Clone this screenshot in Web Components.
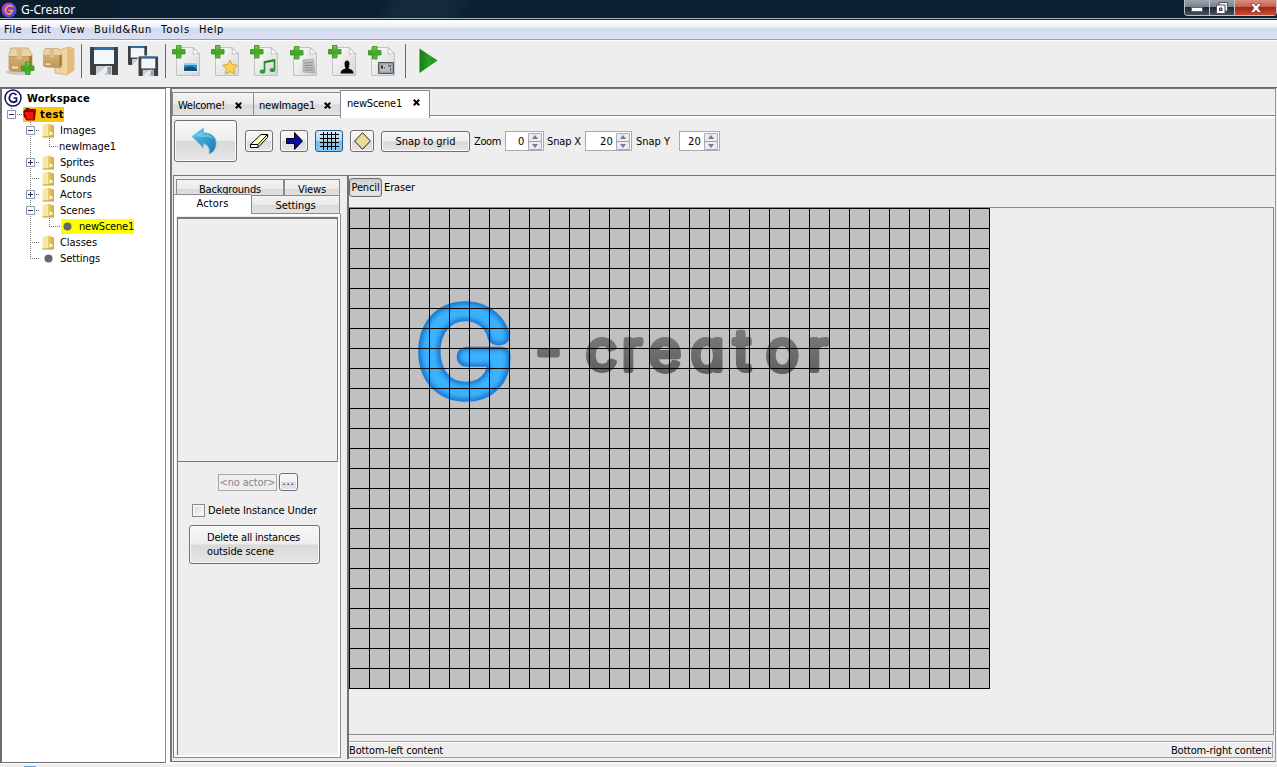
<!DOCTYPE html>
<html lang="en">
<head>
<meta charset="utf-8">
<title>G-Creator</title>
<style>
html,body{margin:0;height:100%;overflow:hidden}
body{background:#eee;color:#000;font:11px/14px "DejaVu Sans Condensed","DejaVu Sans","Noto Sans",sans-serif;font-stretch:condensed}
</style>
</head>
<body>
<app-window></app-window>
<script>
const define=(name,html,setup)=>{
  const t=document.createElement('template');t.innerHTML=html;
  customElements.define(name,class extends HTMLElement{
    constructor(){super();this.attachShadow({mode:'open'}).append(t.content.cloneNode(true));}
    connectedCallback(){if(setup)setup(this,this.shadowRoot);}
  });
};

/* label whose tracking is adjusted to occupy a set width */
define('fit-label',`<style>:host{display:inline-block;flex:none;white-space:pre;line-height:14px}span{display:inline-block}</style><span><slot></slot></span>`,(h,r)=>{
  const w=+h.getAttribute('w'),s=r.querySelector('span');
  if(!w)return;
  s.style.letterSpacing='0px';
  s.style.letterSpacing=((w-s.getBoundingClientRect().width)/h.textContent.length)+'px';
  h.style.width=w+'px';
});

const doc=`<path d="M5.500 2.500h17l6 6v22h-23z" fill="url(#p)" stroke="#c3c3c3"/><path d="M21.500 2.500q2 3 .5 7q3-2 6.500-1z" fill="#fff" stroke="#bbb" stroke-width=".8"/>`;
const plus=(x,y)=>`<path transform="translate(${x} ${y})" d="M4.500.5h4.500v4h4v4.500h-4v4h-4.500v-4h-4v-4.500h4z" fill="url(#g)" stroke="#3d9426" stroke-width=".9"/>`;
const defs=`<defs><linearGradient id="p" x2="1" y2="1"><stop stop-color="#fff"/><stop offset="1" stop-color="#d4d4d4"/></linearGradient><linearGradient id="g" x2="0" y2="1"><stop stop-color="#7ccb4e"/><stop offset=".5" stop-color="#3fa51f"/><stop offset="1" stop-color="#62b93d"/></linearGradient><linearGradient id="b" x2="0" y2="1"><stop stop-color="#dcb87d"/><stop offset="1" stop-color="#c1965a"/></linearGradient><linearGradient id="u" x2="1" y2="1"><stop stop-color="#58c4ee"/><stop offset="1" stop-color="#1878b2"/></linearGradient><linearGradient id="f" x2="1"><stop stop-color="#f4e39a"/><stop offset=".5" stop-color="#e8cf70"/><stop offset="1" stop-color="#cda93e"/></linearGradient><linearGradient id="k" x2="1"><stop stop-color="#157c18"/><stop offset=".5" stop-color="#2c9e28"/><stop offset="1" stop-color="#1e8a1e"/></linearGradient><linearGradient id="o" x2="1" y2="1"><stop stop-color="#e43bb0"/><stop offset=".45" stop-color="#7b3bd8"/><stop offset="1" stop-color="#2c57e8"/></linearGradient></defs>`;
const box=`<path d="M3 8.500L5 2h17l4 6.500v15l-2 2.500-19-1-2-2z" fill="url(#b)" stroke="#b98f55" stroke-width=".7"/><path d="M3 9l2.500-6.500H22l4 6v2H3z" fill="#ecd3a6"/><path d="M3 10.500h20" stroke="#c79d62"/><path d="M23 10.500l3-1.500v14l-3 3z" fill="#a97b41"/><path d="M10.500 2.500h5.500v11h-5z" fill="#dfbd88"/><path d="M6 21.500h6" stroke="#f1dfbe" stroke-width="2"/>`;
const disk=(s)=>`<g transform="${s}"><path d="M0 0h28v28H1L0 27z" fill="#3b4046"/><path d="M4 0h20v3H4z" fill="#2f6cae"/><path d="M4 3h20v14H4z" fill="#f3f7fb"/><path d="M6 19h16v9H6z" fill="#c9ccd0"/><path d="M6 28l10-9h4l-6 9z" fill="#eceef0"/><path d="M17 20h4v7h-3z" fill="#999da4"/></g>`;
const icons={
  app:[16,16,`<circle cx="8" cy="8" r="7.500" fill="url(#o)"/><path d="M11.500 4.500Q8 2.500 5.500 5.500T6 11.500Q9.500 13.500 11.500 8.500H8" fill="none" stroke="#f3a44e" stroke-width="1.700" stroke-linecap="round"/>`],
  pack:[31,32,`<ellipse cx="12" cy="26" rx="12" ry="3" fill="#c9c9c9"/>${box}${plus(15,15.500)}`],
  packs:[32,32,`<path d="M12 6l14-4 5 2v21l-7 5-12-2z" fill="#f0d5a0" stroke="#cda768" stroke-width=".7"/><path d="M24 3v26l7-4V4z" fill="#e3bd7c"/><g transform="translate(-2 2) scale(.8)">${box}</g>`],
  disk:[28,28,disk('')],
  disks:[30,30,disk('scale(.68)')+'<path d="M9.500 9.500h21v21h-21z" fill="#eee"/>'+disk('translate(10.500 10.500) scale(.7)')],
  image:[30,32,doc+`<path d="M12.500 17.500h14v9h-14z" fill="#348ec4" stroke="#eee"/><path d="M13 23q7-4 13 1v2H13z" fill="#164e80"/><path d="M13 19h13" stroke="#8fd4f3" stroke-width="2"/>`+plus(1,0)],
  star:[30,32,doc+`<path d="M20 15l2.200 4.500 5 .8-3.500 3.500.8 5-4.500-2.300-4.500 2.300.8-5-3.500-3.500 5-.8z" fill="#ffd34e" stroke="#d6a322"/>`+plus(1,0)],
  music:[30,32,doc+`<path d="M15.500 26V17l10-2v9.500" fill="none" stroke="#278a2a" stroke-width="1.600"/><path d="M15 18.500l11-2.200v-2L15 16.500z" fill="#278a2a"/><ellipse cx="13.500" cy="26.500" rx="2.800" ry="2" fill="#2c9a2f"/><ellipse cx="23.500" cy="25" rx="2.800" ry="2" fill="#2c9a2f"/>`+plus(1,0)],
  script:[30,32,doc+`<path d="M15 15l10-1 2 14-12-1z" fill="#c4c4c4" stroke="#a0a0a0" stroke-width=".7"/><path d="M16.500 18l8-.5m-8 3l8-.3m-8 2.500l9 .3m-9 2l9 .5" stroke="#888"/>`+plus(2,1)],
  actor:[30,32,doc+`<path d="M13.500 28.500q0-4 5-5l-.6-2Q16.500 16 20 15.500q3.500.5 2.100 6l-.6 2q5 1 5 5z" fill="#080808"/>`+plus(1,0)],
  scene:[30,32,doc+`<path d="M12.500 17.500h15v11h-15z" fill="#969da5" stroke="#555"/><path d="M14.500 19.500h11v7h-11z" fill="#b9c0c8"/><path d="M15 20.500h2v3h-2zm7 0h3v1h-3zm2 3h1v2h-1zm-6-1h1v1h-1z" fill="#333"/>`+plus(2,1)],
  play:[19,26,`<path d="M.5.500L18.500 12.500L.5 25z" fill="url(#k)"/>`],
  undo:[26,28,`<path d="M1 9.500L12.500 1v4.500C22 6 26 11 25 18.500Q24 25 18 27q2-8-5.500-10.500V21z" fill="url(#u)" stroke="#7ac1df" stroke-width=".7"/><path d="M3 9.500l8.500-6V7q8 0 11 5-4-2.500-11-2z" fill="#95def8" opacity=".5"/>`],
  eraser:[18,14,`<path d="M.5 10.500L11 .5h6.500v3L8 13.500H.5z" fill="#ffffc4" stroke="#000"/><path d="M.5 10.500H8L17.500.5M8 10.500v3" fill="none" stroke="#000"/>`],
  arrow:[17,18,`<path d="M.5 6.500h8v-6l8 8.500-8 8.500v-6h-8z" fill="#0a0aa8" stroke="#000"/>`],
  grid:[19,18,`<path d="M3.500 0v18m4-18v18m4-18v18m4-18v18M0 2.500h19M0 6.500h19M0 10.500h19M0 14.500h19" stroke="#000"/>`],
  diamond:[17,18,`<path d="M8.500.7L16.300 9l-7.800 8.300L.7 9z" fill="#eadb98" stroke="#222"/>`],
  close:[7,7,`<path d="M.8.800l5.400 5.400M6.200.800l-5.400 5.400" stroke="#000" stroke-width="2"/>`],
  folder:[13,15,`<path d="M.5 2L6 .5v12L.5 14z" fill="#f6e7a2"/><path d="M6 .5l6 2V14H.5L6 12.500z" fill="url(#f)"/><path d="M7.500 9h3v3h-3z" fill="#fdf6c8"/><path d="M.5 14h11.500" stroke="#b89a45"/>`],
  dot:[13,15,`<circle cx="6.500" cy="7.500" r="4" fill="#666"/>`],
  red:[13,15,`<path d="M1 4.500L3 1.500h3l1 1h5.500l-1 10h-8L1 9z" fill="#b30000" stroke="#400" stroke-width=".8"/><path d="M.8 4.500h9.500l1 8.500H3.500z" fill="#f51414" stroke="#5a0000" stroke-width=".8"/>`],
  logo:[18,18,`<circle cx="9" cy="9" r="8" fill="#fff" stroke="#11115e" stroke-width="1.500"/><path d="M12.500 6Q9 2.500 6.500 6t0 6q3 2.500 6 0V9H9.500" fill="none" stroke="#11115e" stroke-width="1.700"/>`],
  min:[12,5,`<path d="M.5.500h11v4H.5z" fill="#fff" stroke="#666"/>`],
  max:[12,12,`<path d="M3 .5h8.500v8.500H3z" fill="#eee" stroke="#555"/><path d="M.5 3h8.500v8.500H.5z" fill="#fff" stroke="#555"/><path d="M3.500 6h2.500v2.500H3.500z" fill="#abc" stroke="#334"/>`],
  x:[12,10,`<path d="M.5.500h3.500L6 3l2-2.500h3.500L8 5l3.500 4.500H8L6 7 4 9.500H.5L4 5z" fill="#fff" stroke="#7b3a35" stroke-width=".7"/>`]
};
define('ui-icon',`<style>:host{display:inline-block;flex:none}svg{display:block;overflow:visible}</style><div></div>`,(h,r)=>{
  const [w,ht,b]=icons[h.getAttribute('name')];
  r.querySelector('div').innerHTML=`<svg width="${w}" height="${ht}" viewBox="0 0 ${w} ${ht}">${defs}${b}</svg>`;
});

define('title-bar',`<style>
:host{display:flex;flex:none;height:18px;box-sizing:border-box;background:linear-gradient(115deg,#0b1e2e 0 9%,#0c2033 10% 30%,#132a3d 31% 35%,#0b2033 37%);color:#fff;font:12px/18px "Noto Sans","DejaVu Sans",sans-serif;justify-content:space-between;box-shadow:0 1px #a7b0b8,0 2px #14202c}
.n{display:flex;gap:4px;padding:2px 0 0 1px;align-items:center}.n fit-label{line-height:18px}
.c{display:flex;height:16px;border:1px solid #b9c0c6;border-top:0;border-right:0;border-radius:0 0 4px 4px;overflow:hidden;box-sizing:border-box}
.c span{display:flex;align-items:center;justify-content:center;width:25px;background:linear-gradient(#9ba3aa,#79838c 45%,#1b2936 50%,#46535f);border-right:1px solid #c1c7cc;box-sizing:border-box}
.c .x{width:42px;background:linear-gradient(#d99082,#c3604e 45%,#a32713 50%,#c64e33)}
.c .m{padding-top:4px}
</style><div class="n"><ui-icon name="app"></ui-icon><fit-label w="54">G-Creator</fit-label></div><div class="c"><span class="m"><ui-icon name="min"></ui-icon></span><span><ui-icon name="max"></ui-icon></span><span class="x"><ui-icon name="x"></ui-icon></span></div>`);

define('menu-bar',`<style>:host{display:flex;flex:none;height:21px;margin-top:2px;box-sizing:border-box;padding:3px 0 0 4px;gap:9px;background:linear-gradient(#fff,#eff1f9 35%,#d6dcef 42%,#dbe1f3);border-bottom:1px solid #fff;box-shadow:inset 0 -1px #a0a0a4}</style>
<fit-label w="18">File</fit-label><fit-label w="20">Edit</fit-label><fit-label w="25">View</fit-label><fit-label w="58">Build&amp;Run</fit-label><fit-label w="29">Tools</fit-label><fit-label w="25">Help</fit-label>`);

define('tool-bar',`<style>:host{display:flex;flex:none;height:46px;box-sizing:border-box;padding:3px 0 0 6px;align-items:flex-start;background:#eee}i{width:1px;height:34px;background:#666;flex:none}
.d{margin-top:3px}.docs{display:flex;gap:9px;margin:1px 0 0 5px}</style>
<ui-icon name="pack" style="margin-top:2px"></ui-icon><ui-icon name="packs" style="margin-left:6px;margin-top:1px"></ui-icon><i style="margin-left:6px"></i>
<ui-icon class="d" name="disk" style="margin-left:8px"></ui-icon><ui-icon name="disks" style="margin:2px 0 0 10px"></ui-icon><i style="margin-left:7px"></i>
<div class="docs"><ui-icon name="image"></ui-icon><ui-icon name="star"></ui-icon><ui-icon name="music"></ui-icon><ui-icon name="script"></ui-icon><ui-icon name="actor"></ui-icon><ui-icon name="scene"></ui-icon></div>
<i style="margin-left:9px"></i><ui-icon name="play" style="margin:4px 0 0 13px"></ui-icon>`);

/* one tree row; guide lines and expander are drawn in a fixed-width gutter */
define('tree-row',`<style>:host{display:flex;height:16px;align-items:center;box-sizing:border-box}svg{display:block;flex:none}.v{display:flex;align-items:center;height:15px;margin-bottom:-1px}::slotted(fit-label){margin-top:1px}</style><svg height="16"></svg><div class="v"><slot></slot></div>`,(h,r)=>{
  const s=r.querySelector('svg'),w=+h.getAttribute('gutter'),ex=h.getAttribute('ex'),lv=+h.getAttribute('level'),last=h.hasAttribute('last');
  s.setAttribute('width',w);
  const d='stroke="#777" stroke-dasharray="1 1" fill="none"';let m='';
  if(lv==1)m+=`<path d="M9.500 0V8M9 8.500H${w}" ${d}/>`;
  if(lv>=2)m+=`<path d="M28.500 0V${last?9:16}" ${d}/>`;
  if(lv==2)m+=`<path d="M28 8.500H${w-2}" ${d}/>`;
  if(lv==3)m+=`<path d="M47.500 0V8M47 8.500H${w-1}" ${d}/>`;
  if(ex){const x=lv==1?5:24;m+=`<g transform="translate(${x} 4)"><path d="M.5.500h8v8h-8z" fill="#f8fbff" stroke="#8a98ad"/><path d="M2 4.500h5${ex=='+'?'M4.500 2v5':''}" stroke="#335"/></g>`;}
  s.innerHTML=m;
  const c=h.getAttribute('mark');if(c){r.querySelector('.v').style.background=c;}
});
define('workspace-tree',`<style>:host{display:block;width:166px;flex:none;box-sizing:border-box;border:solid #6e6e72;border-width:1px 1px 1px 2px;border-right-color:#8a8a92;background:#fff;height:675px;padding-top:1px}
.b{font:bold 11px/14px "DejaVu Sans Condensed","DejaVu Sans",sans-serif}div{display:flex;height:16px;align-items:center;padding-left:2px}div fit-label{margin:1px 0 0 5px}tree-row ui-icon+fit-label{margin-left:5px}tree-row ui-icon[name=red]+fit-label{margin-left:4px}</style>
<div><ui-icon name="logo"></ui-icon><fit-label class="b" w="63">Workspace</fit-label></div>
<tree-row level="1" gutter="21" ex="-" mark="#ffc20e"><ui-icon name="red"></ui-icon><fit-label class="b" w="24">test</fit-label></tree-row>
<tree-row level="2" gutter="40" ex="-"><ui-icon name="folder"></ui-icon><fit-label w="36">Images</fit-label></tree-row>
<tree-row level="3" gutter="57"><fit-label w="57">newImage1</fit-label></tree-row>
<tree-row level="2" gutter="40" ex="+"><ui-icon name="folder"></ui-icon><fit-label w="34">Sprites</fit-label></tree-row>
<tree-row level="2" gutter="40"><ui-icon name="folder"></ui-icon><fit-label w="36">Sounds</fit-label></tree-row>
<tree-row level="2" gutter="40" ex="+"><ui-icon name="folder"></ui-icon><fit-label w="32">Actors</fit-label></tree-row>
<tree-row level="2" gutter="40" ex="-"><ui-icon name="folder"></ui-icon><fit-label w="35">Scenes</fit-label></tree-row>
<tree-row level="3" gutter="59" mark="#ff0"><ui-icon name="dot"></ui-icon><fit-label w="55">newScene1</fit-label></tree-row>
<tree-row level="2" gutter="40"><ui-icon name="folder"></ui-icon><fit-label w="37">Classes</fit-label></tree-row>
<tree-row level="2" gutter="40" last><ui-icon name="dot"></ui-icon><fit-label w="40">Settings</fit-label></tree-row>`);

define('doc-tab',`<style>:host{display:flex;box-sizing:border-box;height:24px;border:1px solid #8a8a90;border-right:0;padding:6px 0 0 5px;justify-content:space-between;background:linear-gradient(#f3f3f3,#eaeaea 50%,#d8d8d8 55%,#e4e4e4)}ui-icon{margin:3px var(--close-gap,11px) 0 0}
:host([active]){background:#fff;border-bottom:0;border-right:1px solid #8a8a90;padding:6px 0 0 6px}:host([active]) ui-icon{margin:2px 9px 0 0}</style><slot></slot><ui-icon name="close"></ui-icon>`);

define('push-button',`<style>:host{display:flex;flex:none;box-sizing:border-box;border:1px solid #6f6f74;border-radius:3px;background:linear-gradient(#f7f7f7,#eeeeee 48%,#d8d8d8 52%,#e6e6e6);box-shadow:inset 0 0 0 1px #fafafa;align-items:center;justify-content:center}
:host([on]){background:linear-gradient(#d5ecfa,#a9d8f4 48%,#78bfe8 52%,#86c8ee);box-shadow:none;border-color:#2c5a80}
:host([down]){background:linear-gradient(#cfcfcf,#dedede 50%,#e8e8e8);box-shadow:inset 0 0 1px #777}</style><slot></slot>`);

define('num-spinner',`<style>:host{display:flex;flex:none;box-sizing:border-box;height:20px;border:1px solid #a9a9b0;background:#fff;justify-content:flex-end;align-items:center}::slotted(fit-label){margin-top:2px}.s{display:flex;flex-direction:column;width:14px;height:17px;margin-left:3px;margin-right:1px}svg{display:block}</style><slot></slot><div class="s"><svg width="14" height="17"><path d="M.5.500h13v16H.5z" fill="#ececec" stroke="#aaabb4"/><path d="M0 8.500h14" stroke="#8fa0c4"/><path d="M4 6l3-4 3 4zM4 11l3 4 3-4z" fill="#6c7ca0"/></svg></div>`);

define('editor-tools',`<style>:host{display:flex;height:57px;box-sizing:border-box;padding:2px 0 0 2px;align-items:flex-start}.r{display:flex;height:42px;align-items:center}.r>fit-label,push-button>fit-label{padding-top:2px}.i{width:28px;height:22px;margin-left:7px}</style>
<push-button style="width:63px;height:42px"><ui-icon name="undo" style="margin-right:4px"></ui-icon></push-button>
<div class="r"><push-button class="i" style="margin-left:8px"><ui-icon name="eraser"></ui-icon></push-button><push-button class="i"><ui-icon name="arrow"></ui-icon></push-button><push-button class="i" on><ui-icon name="grid"></ui-icon></push-button><push-button class="i" style="width:24px"><ui-icon name="diamond"></ui-icon></push-button>
<push-button style="width:89px;height:21px;margin-left:7px"><fit-label w="60">Snap to grid</fit-label></push-button>
<fit-label w="27" style="margin-left:4px">Zoom</fit-label><num-spinner style="width:39px;margin-left:4px"><fit-label w="7">0</fit-label></num-spinner>
<fit-label w="34" style="margin-left:3px">Snap X</fit-label><num-spinner style="width:47px;margin-left:4px"><fit-label w="13">20</fit-label></num-spinner>
<fit-label w="34" style="margin-left:4px">Snap Y</fit-label><num-spinner style="width:41px;margin-left:9px"><fit-label w="13">20</fit-label></num-spinner></div>`);

define('side-panel',`<style>
:host{display:flex;flex-direction:column;width:168px;height:582px;box-sizing:border-box;border-left:1px solid #77777c;border-bottom:1px solid #888;flex:none}
.t{display:grid;grid-template-columns:108px 56px;padding:3px 0 0 2px;height:18px;box-sizing:border-box}
.t span,.u span{box-sizing:border-box;border:1px solid #8a8a90;background:linear-gradient(#f3f3f3,#ebebeb 50%,#dadada 55%,#e3e3e3);display:flex;justify-content:center;padding-top:3px;height:18px;border-bottom:0}
.u{display:grid;grid-template-columns:77px 89px;align-items:end;height:20px;position:relative;z-index:1}
.u span{height:19px;padding-top:3px;border-bottom:1px solid #8a8a90}.u .a{height:20px;background:#fff;border:0;border-top:1px solid #8a8a90;padding-top:2px}
.p{flex:1;border-right:1px solid #8a8a90;box-shadow:inset 2px 2px #fff,inset -2px -2px #fff;padding:3px 0 2px 3px;display:flex;flex-direction:column;box-sizing:border-box}
.q{flex:1;border-left:1px solid #77777c;display:flex;flex-direction:column;align-items:flex-start}
.l{width:161px;height:245px;box-sizing:border-box;border:1px solid #77777c;border-top:2px solid #77777c;flex:none;margin-left:-1px}
.n{display:flex;gap:2px;margin:11px 0 0 40px;align-items:center}.n b{font-weight:normal;color:#888;border:1px solid #aaa;height:17px;width:59px;box-sizing:border-box;display:flex;justify-content:center;padding-top:1px}
.k{display:flex;align-items:center;margin:12px 0 0 14px;gap:3px}.k fit-label{padding-top:1px}.k i{width:13px;height:13px;box-sizing:border-box;border:1px solid #8a8a90;background:linear-gradient(135deg,#d2d2d2,#fff);box-shadow:inset 0 0 0 2px #f3f3f3}
</style>
<div class="t"><span><fit-label w="62">Backgrounds</fit-label></span><span><fit-label w="28">Views</fit-label></span></div>
<div class="u"><span class="a"><fit-label w="32">Actors</fit-label></span><span><fit-label w="40">Settings</fit-label></span></div>
<div class="p"><div class="q"><div class="l"></div>
<div class="n"><b><fit-label w="56">&lt;no actor&gt;</fit-label></b><push-button style="width:19px;height:18px"><fit-label w="12">...</fit-label></push-button></div>
<div class="k"><i></i><fit-label w="109">Delete Instance Under</fit-label></div>
<push-button style="width:131px;height:39px;margin:7px 0 0 11px"><div style="width:95px"><fit-label w="93">Delete all instances</fit-label><fit-label w="67">outside scene</fit-label></div></push-button>
</div></div>`);

const gridPath=(()=>{let d='';for(let x=0;x<=640;x+=20)d+=`M${x+.5} 0V481`;for(let y=0;y<=480;y+=20)d+=`M0 ${y+.5}H641`;return d;})();
define('scene-canvas',`<style>:host{display:block}svg{display:block}</style><svg width="641" height="481">
<defs><linearGradient id="t" x1="0" x2="0" y1="118" y2="166" gradientUnits="userSpaceOnUse"><stop stop-color="#7d7d7d"/><stop offset="1" stop-color="#606060"/></linearGradient><filter id="s"><feGaussianBlur stdDeviation="2"/></filter></defs>
<rect width="641" height="481" fill="#c0c0c0"/>
<g transform="translate(69 0) scale(1.12 1)" font-family="Inter,sans-serif" font-size="111" font-weight="100" stroke-linejoin="round" stroke-linecap="round"><text x="1" y="184.500" fill="#1b78d4" stroke="#1b78d4" stroke-width="17.500">G</text><text x="1" y="184.500" fill="#3ab2fd" stroke="#3ab2fd" stroke-width="11" filter="url(#s)" aria-hidden="true">G</text></g>
<text font-family="Inter,sans-serif" font-size="55" font-weight="300" style="font-feature-settings:'cv11'" fill="url(#t)" stroke="url(#t)" stroke-width="6" stroke-linejoin="round" x="187 212 237 273 300 342 385 417 459" y="162">- creator</text>
<path d="${gridPath}" stroke="#000"/></svg>`);

define('scene-view',`<style>
:host{display:flex;flex-direction:column;flex:1;height:583px;box-sizing:border-box;border-left:2px solid #707075;margin-left:6px}
.m{display:flex;height:31px;box-sizing:border-box;padding-top:2px;align-items:flex-start;gap:2px}.m>fit-label{margin-top:3px}
.s{height:528px;width:925px;box-sizing:border-box;border:1px solid #8a8a90;border-left:0}
.b{display:flex;justify-content:space-between;width:924px;height:17px;margin-top:6px;box-sizing:border-box;border:1px solid #a0a0a4;border-left:0;padding:2px 1px 0 0;box-shadow:inset 0 1px #fff}
</style>
<div class="m"><push-button down style="width:33px;height:19px"><fit-label w="28">Pencil</fit-label></push-button><fit-label w="31">Eraser</fit-label></div>
<div class="s"><scene-canvas></scene-canvas></div>
<div class="b"><fit-label w="94">Bottom-left content</fit-label><fit-label w="100">Bottom-right content</fit-label></div>`);

define('editor-area',`<style>:host{display:flex;flex-direction:column;width:1106px;height:674px;margin-left:4px;box-sizing:border-box;border:solid #77777c;border-width:1px 1px 1px 2px;border-right-color:#999}
.t{display:flex;align-items:flex-end;height:29px;box-shadow:inset 0 -1px #fff,inset 0 -2px #fff,inset 0 -3px #858589}doc-tab{margin-bottom:2px}doc-tab[active]{margin-bottom:0;height:28px}
.w{display:flex;border-top:1px solid #77777c;height:583px;margin-left:1px}</style>
<div class="t"><doc-tab style="width:81px"><fit-label w="47">Welcome!</fit-label></doc-tab><doc-tab style="width:87px;--close-gap:9px"><fit-label w="56">newImage1</fit-label></doc-tab><doc-tab active style="width:90px"><fit-label w="55">newScene1</fit-label></doc-tab></div>
<editor-tools></editor-tools>
<div class="w"><side-panel></side-panel><scene-view></scene-view></div>`);

define('app-window',`<style>:host{display:flex;flex-direction:column;width:1277px;height:767px;background:#eee;overflow:hidden}.m{display:flex;flex:none;border-top:1px solid #66666a;height:675px;background:linear-gradient(90deg,#fff 171px,#eee 171px);border-bottom:1px solid #fff}footer{padding-left:24px}footer i{display:block;width:12px;height:1px;margin-top:2px;background:#6aa5dc}</style>
<title-bar></title-bar><menu-bar></menu-bar><tool-bar></tool-bar><div class="m"><workspace-tree></workspace-tree><editor-area></editor-area></div><footer><i></i></footer>`);
</script>
</body>
</html>
